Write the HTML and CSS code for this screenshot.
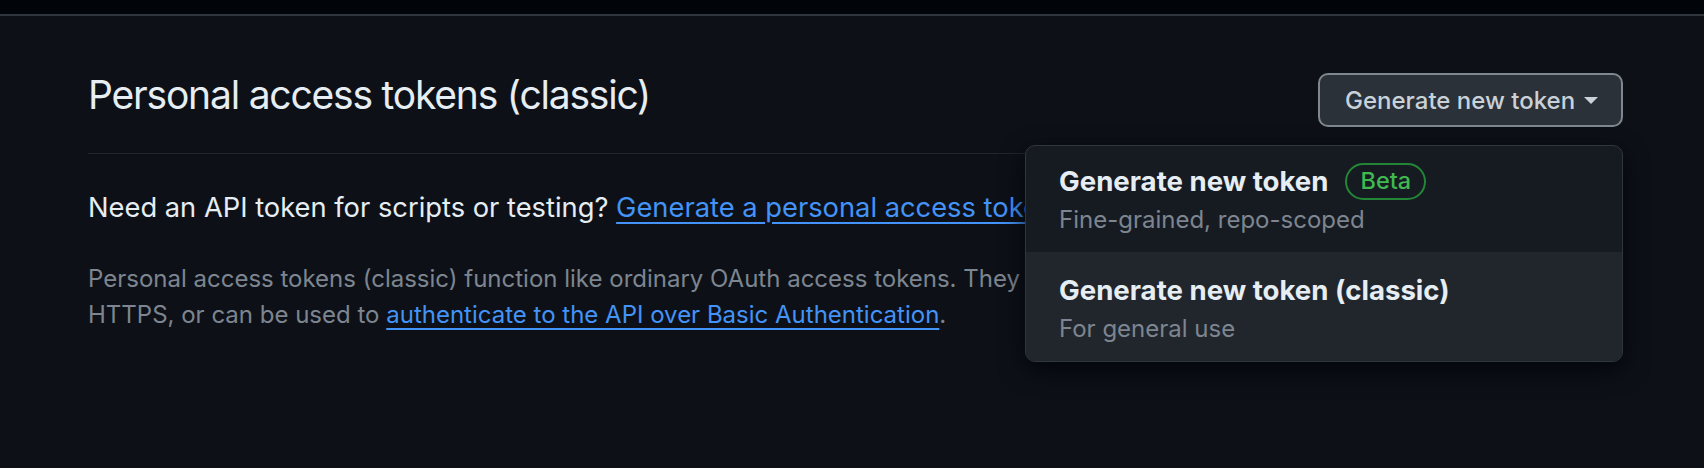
FILE: index.html
```html
<!DOCTYPE html>
<html lang="en">
<head>
<meta charset="utf-8">
<title>Personal access tokens (classic)</title>
<link rel="stylesheet" href="styles.css">
</head>
<body>
<header class="topbar"></header>
<main class="page">
  <div class="subhead">
    <h2 class="subhead-heading">Personal access tokens (classic)</h2>
    <div class="subhead-actions">
      <button class="btn" type="button" aria-expanded="true">Generate new token <span class="caret"></span></button>
      <div class="menu" role="menu">
        <a class="menu-item menu-item-first" role="menuitem" href="#">
          <span class="menu-title">Generate new token <span class="label">Beta</span></span>
          <span class="menu-desc">Fine-grained, repo-scoped</span>
        </a>
        <a class="menu-item menu-item-active" role="menuitem" href="#">
          <span class="menu-title">Generate new token (classic)</span>
          <span class="menu-desc">For general use</span>
        </a>
      </div>
    </div>
  </div>
  <p class="lead">Need an API token for scripts or testing? <a class="link" href="#">Generate a personal access token</a> for quick access to the GitHub API.</p>
  <p class="note">Personal access tokens (classic) function like ordinary OAuth access tokens. They can be used instead of a password for Git over HTTPS, or can be used to <a class="link" href="#">authenticate to the API over Basic Authentication</a>.</p>
</main>
</body>
</html>
```
FILE: styles.css
```css
* { box-sizing: border-box; }
html, body { margin: 0; padding: 0; }
body {
  background: #0d1117;
  color: #e6edf3;
  font-family: Inter, "Noto Sans", "Liberation Sans", sans-serif;
  height: 468px;
  overflow: hidden;
}
.topbar {
  height: 16px;
  background: #010409;
  border-bottom: 2px solid #30363d;
}
.page {
  padding: 0 81px 0 88px;
}
.subhead {
  display: flex;
  align-items: flex-start;
  padding-top: 57px;
  padding-bottom: 26px;
  border-bottom: 1px solid #21262d;
}
.subhead-heading {
  flex: 1;
  margin: -2px 0 0;
  font-size: 39px;
  line-height: 48px;
  font-weight: 400;
  letter-spacing: -1.2px;
  color: #e6edf3;
}
.subhead-actions {
  position: relative;
}
.btn {
  display: flex;
  align-items: center;
  gap: 9px;
  height: 54px;
  width: 305px;
  padding: 0 0 0 25px;
  background: #2b3138;
  color: #c9d1d9;
  border: 2px solid #80878f;
  border-radius: 10px;
  font-family: inherit;
  font-size: 24px;
  font-weight: 500;
}
.caret {
  width: 0;
  height: 0;
  border-left: 7px solid transparent;
  border-right: 7px solid transparent;
  border-top: 7px solid #c9d1d9;
}
.menu {
  position: absolute;
  top: 72px;
  right: 0;
  width: 598px;
  background: #161b22;
  border: 1px solid #30363d;
  border-radius: 10px;
  overflow: hidden;
  box-shadow: 0 8px 24px rgba(1, 4, 9, 0.85);
  z-index: 10;
}
.menu-item {
  display: flex;
  flex-direction: column;
  padding: 19px 33px 14px;
  text-decoration: none;
  color: #e6edf3;
}
.menu-item-first {
  padding-top: 16px;
  height: 106px;
}
.menu-item-active {
  background: #21262d;
  height: 109px;
}
.menu-title {
  display: flex;
  align-items: center;
  gap: 17px;
  font-size: 27.6px;
  line-height: 38px;
  font-weight: 700;
  height: 38px;
}
.menu-desc {
  margin-top: 2px;
  font-size: 24px;
  line-height: 36px;
  color: #7d8590;
}
.label {
  display: inline-flex;
  align-items: center;
  height: 37px;
  padding: 0 13px;
  border: 2px solid #238636;
  border-radius: 999px;
  color: #3fb950;
  font-size: 23.5px;
  font-weight: 500;
}
.lead {
  margin: 34px 0 0;
  font-size: 27.3px;
  line-height: 40px;
}
.note {
  margin: 33px 0 0;
  font-size: 24px;
  line-height: 36px;
  color: #7d8590;
}
.link {
  color: #4493f8;
  text-decoration: underline;
  text-decoration-thickness: 2px;
  text-underline-offset: 5px;
}
```
